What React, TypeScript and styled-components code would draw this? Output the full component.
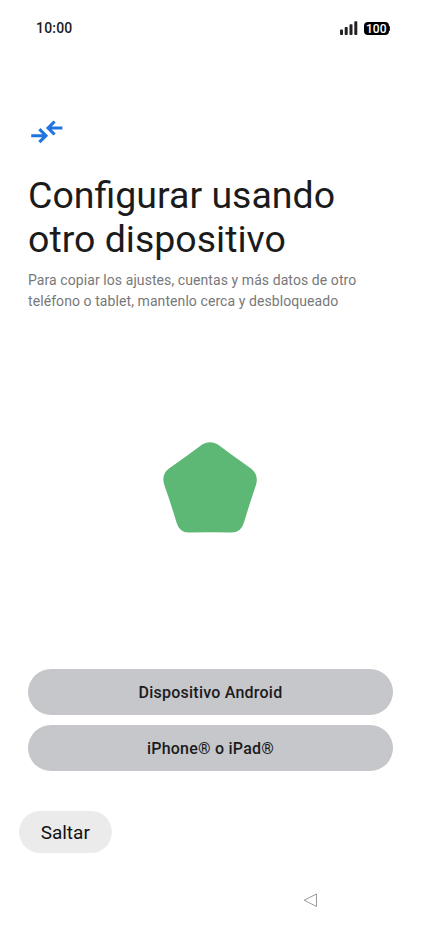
import React from "react";
import styled, { createGlobalStyle } from "styled-components";

const GlobalStyle = createGlobalStyle`
  * { box-sizing: border-box; }
  body { margin: 0; background: #fff; font-family: Roboto, sans-serif; color: #1b1b1c; }
`;

const Screen = styled.main`
  width: 421px;
  height: 926px;
  display: flex;
  flex-direction: column;
  background: #fff;
  overflow: hidden;
`;

const StatusBar = styled.header`
  height: 56px;
  padding: 0 31px 0 36px;
  display: flex;
  align-items: center;
  justify-content: space-between;
`;

const Clock = styled.span`
  font-size: 14px;
  font-weight: 500;
  letter-spacing: 0.2px;
`;

const Indicators = styled.div`
  display: flex;
  align-items: center;
  gap: 6px;
`;

const BatteryGroup = styled.div`
  display: flex;
  align-items: center;
`;

const Battery = styled.div`
  width: 25.5px;
  height: 13px;
  margin-top: 1px;
  border-radius: 4px;
  background: #000;
  color: #fff;
  font-size: 12px;
  line-height: 14px;
  font-weight: 500;
  text-align: center;
`;

const BatteryTip = styled.div`
  width: 1px;
  height: 5px;
  background: #222;
  border-radius: 0 1px 1px 0;
`;

const Intro = styled.section`
  height: 386px;
  padding: 64px 28px 0;
`;

const TransferIcon = styled.svg`
  display: block;
  width: 38px;
  height: 24px;
`;

const Title = styled.h1`
  margin: 29px 0 0;
  font-size: 37.5px;
  line-height: 44px;
  font-weight: 400;
  white-space: nowrap;
`;

const Description = styled.p`
  margin: 9px 0 0;
  font-size: 14px;
  line-height: 21px;
  letter-spacing: 0.08px;
  color: #777879;
  white-space: nowrap;
`;

const Illustration = styled.div`
  height: 226.5px;
  display: flex;
  justify-content: center;
`;

const Choices = styled.div`
  display: flex;
  flex-direction: column;
  gap: 9.5px;
  padding: 0 28px;
`;

const ChoiceButton = styled.button`
  height: 46.5px;
  padding: 1px 0 0;
  border: 0;
  border-radius: 24px;
  background: #c6c7cb;
  color: #1b1b1c;
  font: 500 16px Roboto, sans-serif;
  letter-spacing: 0.23px;
`;

const SkipButton = styled.button`
  width: 93.5px;
  height: 42px;
  margin: 40px 0 0 18.5px;
  padding: 1px 0 0;
  border: 0;
  border-radius: 21px;
  background: #ebebeb;
  color: #111;
  font: 400 19px Roboto, sans-serif;
`;

const Navigation = styled.nav`
  display: flex;
  justify-content: flex-end;
  padding: 39px 103px 0 0;
`;

export default function App() {
  return (
    <>
      <GlobalStyle />
      <Screen>
        <StatusBar>
          <Clock>10:00</Clock>
          <Indicators>
            <svg width="18" height="14" viewBox="0.5 0 18 14" fill="#222">
              <rect x="0.5" y="8.5" width="3" height="5.5" rx="0.8" />
              <rect x="5.2" y="6" width="3" height="8" rx="0.8" />
              <rect x="10" y="3.3" width="3" height="10.7" rx="0.8" />
              <rect x="14.8" y="0.3" width="3" height="13.7" rx="0.8" />
            </svg>
            <BatteryGroup>
              <Battery>100</Battery>
              <BatteryTip />
            </BatteryGroup>
          </Indicators>
        </StatusBar>
        <Intro>
          <TransferIcon viewBox="0 0 38 24" fill="none" stroke="#1f74e0" strokeWidth="3.1">
            <path d="M3.2 15.7H18M11.4 9.2L17.9 15.7L11.4 22.2M34.4 8H20M26.6 1.5L20.1 8L26.6 14.5" />
          </TransferIcon>
          <Title>Configurar usando<br />otro dispositivo</Title>
          <Description>
            Para copiar los ajustes, cuentas y más datos de otro<br />
            teléfono o tablet, mantenlo cerca y desbloqueado
          </Description>
        </Intro>
        <Illustration>
          <svg width="95" height="91" viewBox="0 0 95 91">
            <path
              fill="#5db775"
              d="M39.5 2.3Q47-2 54.5 2.3Q70 14 88 26.5Q96 32.5 93 43Q86.5 62 80.8 81Q78 90.5 68.5 90.5Q47 90.2 25.5 90.5Q16.5 90.5 13.7 81Q8 62 1.3 43Q-2 32.5 6 26.5Q24 14 39.5 2.3Z"
            />
          </svg>
        </Illustration>
        <Choices>
          <ChoiceButton>Dispositivo Android</ChoiceButton>
          <ChoiceButton>iPhone® o iPad®</ChoiceButton>
        </Choices>
        <SkipButton>Saltar</SkipButton>
        <Navigation>
          <svg width="15" height="16" viewBox="0 0 15 16" fill="none" stroke="#999" strokeLinejoin="round">
            <path d="M1.2 8.2L13.5 2V14.5Z" />
          </svg>
        </Navigation>
      </Screen>
    </>
  );
}
